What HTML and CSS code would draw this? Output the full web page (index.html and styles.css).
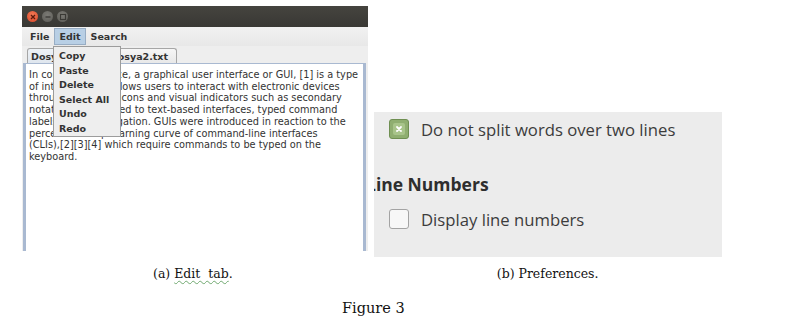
FILE: index.html
```html
<!DOCTYPE html>
<html>
<head>
<meta charset="utf-8">
<link rel="stylesheet" href="styles.css">
</head>
<body>
<div class="page">
  <div class="top">
    <div class="window">
      <div class="titlebar">
        <span class="wbtn close"><svg width="8" height="8" viewBox="0 0 8 8"><path d="M2 2L6 6M6 2L2 6" stroke="#5a1a0c" stroke-width="1.3"/></svg></span>
        <span class="wbtn min"><svg width="8" height="8" viewBox="0 0 8 8"><path d="M1.5 4H6.5" stroke="#3a3935" stroke-width="1.3"/></svg></span>
        <span class="wbtn max"><svg width="8" height="8" viewBox="0 0 8 8"><rect x="1.5" y="1.5" width="5" height="5" fill="none" stroke="#3a3935" stroke-width="1.1"/></svg></span>
      </div>
      <div class="menubar">
        <span class="mitem">File</span>
        <span class="mitem active">Edit</span>
        <span class="mitem">Search</span>
      </div>
      <div class="tabs">
        <span class="tab sel">Dosya1.txt</span>
        <span class="tab">Dosya2.txt</span>
      </div>
      <div class="editor">
        <div class="text">In computer science, a graphical user interface or GUI, [1] is a type
of interface that allows users to interact with electronic devices
through graphical icons and visual indicators such as secondary
notation, as opposed to text-based interfaces, typed command
labels or text navigation. GUIs were introduced in reaction to the
perceived steep learning curve of command-line interfaces
(CLIs),[2][3][4] which require commands to be typed on the
keyboard.</div>
      </div>
      <div class="popup">
        <div class="pitem">Copy</div>
        <div class="pitem">Paste</div>
        <div class="pitem">Delete</div>
        <div class="pitem">Select All</div>
        <div class="pitem">Undo</div>
        <div class="pitem">Redo</div>
      </div>
    </div>
    <div class="prefs">
      <div class="row first">
        <span class="check on"><span class="inner"><svg width="8" height="8" viewBox="0 0 8 8"><path d="M2 2L6 6M6 2L2 6" stroke="#ffffff" stroke-width="1.8" stroke-linecap="round"/></svg></span></span>
        <span class="label">Do not split words over two lines</span>
      </div>
      <div class="heading">Line Numbers</div>
      <div class="row second">
        <span class="check"></span>
        <span class="label">Display line numbers</span>
      </div>
    </div>
  </div>
  <div class="captions">
    <span class="cap a">(a) <span class="squig">Edit&nbsp; tab</span>.</span>
    <span class="cap b">(b) Preferences.</span>
  </div>
  <div class="figure">Figure 3</div>
</div>
</body>
</html>
```
FILE: styles.css
```css
html, body {
  margin: 0;
  padding: 0;
  background: #ffffff;
}
.page {
  width: 789px;
  height: 323px;
  display: flex;
  flex-direction: column;
}
.top {
  display: flex;
  padding: 6px 0 0 22px;
  height: 252px;
  align-items: flex-start;
}
.window {
  position: relative;
  width: 346px;
  height: 245px;
  display: flex;
  flex-direction: column;
  background: #eeeeee;
  font-family: "DejaVu Sans", sans-serif;
}
.titlebar {
  height: 21px;
  background: linear-gradient(#45443f, #393834);
  display: flex;
  align-items: center;
  gap: 4px;
  padding-left: 5px;
}
.wbtn {
  width: 11px;
  height: 11px;
  border-radius: 50%;
  display: flex;
  align-items: center;
  justify-content: center;
}
.wbtn.close {
  background: radial-gradient(circle at 50% 35%, #f37a55, #d8472a);
}
.wbtn.min, .wbtn.max {
  background: radial-gradient(circle at 50% 35%, #7b7a75, #5c5b56);
}
.menubar {
  height: 19px;
  display: flex;
  align-items: center;
  padding-left: 3px;
  background: linear-gradient(#f1f1f1, #e8e8e8);
  font-weight: bold;
  font-size: 9.5px;
  color: #333333;
}
.mitem {
  padding: 2px 4px;
  border: 1px solid transparent;
}
.mitem.active {
  background: #b8cfe5;
  border-color: #98adc4;
}
.tabs {
  height: 17px;
  display: flex;
  align-items: flex-end;
  padding-left: 5px;
  font-weight: bold;
  font-size: 9.5px;
  color: #333333;
}
.tab {
  height: 15px;
  padding: 0 4px 0 3px;
  display: flex;
  align-items: center;
  border: 1px solid #a6a6a6;
  border-bottom: none;
  border-radius: 3px 3px 0 0;
  background: linear-gradient(#eef2f6, #dfe6ee);
  margin-right: 2px;
  box-sizing: border-box;
}
.tab.sel {
  width: 72px;
}
.tab + .tab {
  width: 76px;
  padding-right: 8px;
  justify-content: flex-end;
  background: linear-gradient(#f6f6f6, #e8e8e8);
}
.editor {
  flex: 1;
  margin: 0 2px 0 1px;
  background: #ffffff;
  border-left: 3px solid #a9b9d1;
  border-right: 3px solid #a9b9d1;
  border-top: 1px solid #a9b9d1;
  padding: 5px 0 0 3px;
}
.text {
  white-space: pre;
  font-size: 9.75px;
  line-height: 11.7px;
  color: #333333;
}
.popup {
  position: absolute;
  left: 31px;
  top: 40px;
  width: 68px;
  height: 91px;
  background: #eeeeee;
  border: 1px solid #9c9c9c;
  padding-top: 2px;
  font-weight: bold;
  font-size: 9.5px;
  color: #333333;
  box-sizing: border-box;
}
.pitem {
  height: 14.6px;
  line-height: 14.6px;
  padding-left: 5px;
}
.prefs {
  margin: 106px 0 0 6px;
  width: 348px;
  height: 145px;
  background: #ececec;
  font-family: "Open Sans", sans-serif;
  color: #3c3c3c;
  display: flex;
  flex-direction: column;
  overflow: hidden;
}
.row {
  display: flex;
  align-items: center;
  gap: 12px;
  padding-left: 15px;
  height: 20px;
}
.row.first {
  margin-top: 7px;
}
.label {
  font-size: 16.7px;
}
.check {
  width: 18px;
  height: 18px;
  border: 1px solid #a3a3a3;
  border-radius: 3px;
  background: #f7f7f7;
  display: flex;
  align-items: center;
  justify-content: center;
}
.check.on {
  background: #8fae70;
  border-color: #6f8f52;
}
.check.on .inner {
  width: 12px;
  height: 12px;
  border-radius: 2px;
  background: #a8c48a;
  display: flex;
  align-items: center;
  justify-content: center;
}
.heading {
  font-size: 17.5px;
  font-weight: bold;
  color: #2e2e2e;
  margin: 33px 0 0 -8px;
  height: 24px;
  line-height: 24px;
}
.row.second {
  margin-top: 13px;
}
.captions {
  display: flex;
  height: 30px;
  align-items: center;
  font-family: "DejaVu Serif", serif;
  font-size: 12.5px;
  color: #111111;
}
.cap.a {
  margin-left: 153px;
}
.cap.b {
  margin-left: 264px;
}
.squig {
  text-decoration: underline wavy #6fa86f;
  text-decoration-thickness: 1px;
  text-underline-offset: 2px;
}
.figure {
  margin: 12px 0 0 342px;
  font-family: "DejaVu Serif", serif;
  font-size: 14.5px;
  color: #111111;
}
```
